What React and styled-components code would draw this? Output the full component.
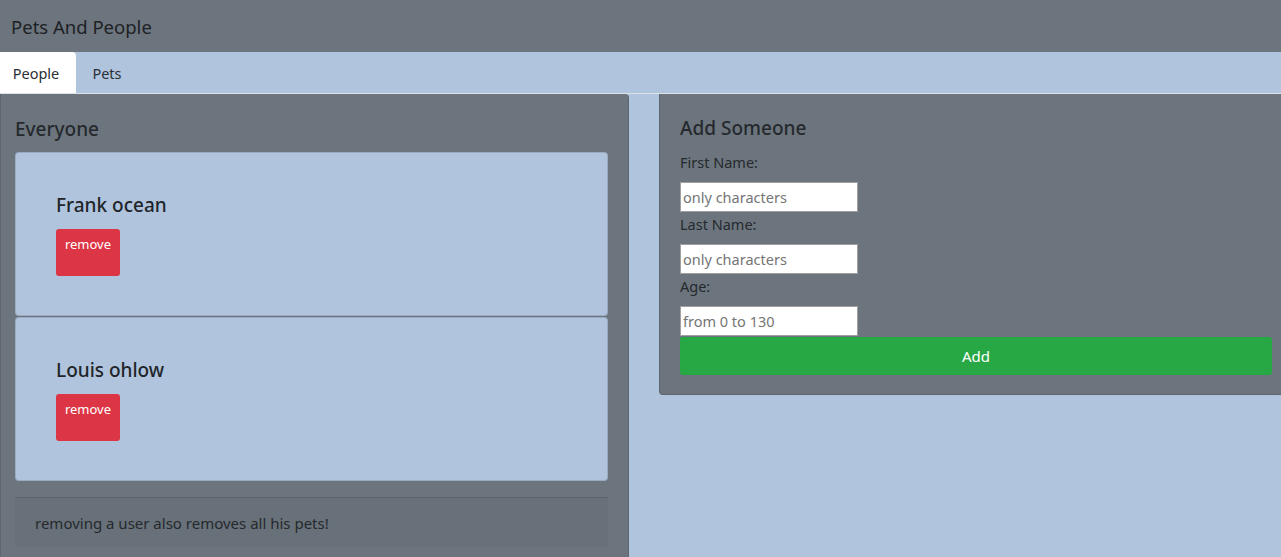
import React from 'react'
import styled, { createGlobalStyle } from 'styled-components'

const GlobalStyle = createGlobalStyle`
  html, body {
    margin: 0;
    padding: 0;
    background: #b0c4de;
    font-family: "Noto Sans", "Open Sans", sans-serif;
    color: #212529;
    overflow: hidden;
  }
`;

const NavBar = styled.header`
  height: 52px;
  background: #6c757d;
  display: flex;
  align-items: center;
  padding: 0 11px;
  font-size: 18.5px;
  color: #1e2125;
`;

const Tabs = styled.nav`
  display: flex;
  height: 41px;
  border-bottom: 1px solid #dee2e6;
  background: #b0c4de;
`;

const Tab = styled.div`
  width: ${p => p.$w}px;
  display: flex;
  align-items: center;
  justify-content: center;
  padding-right: ${p => (p.$active ? 4 : 0)}px;
  box-sizing: border-box;
  font-size: 14.5px;
  color: #2b3035;
  background: ${p => (p.$active ? '#fff' : 'transparent')};
  border-top-right-radius: 4px;
`;

const Content = styled.main`
  display: grid;
  grid-template-columns: 629px 1fr;
  column-gap: 30px;
  align-items: start;
  height: 464px;
`;

const Panel = styled.section`
  background: #6c757d;
  border: 1px solid rgba(0, 0, 0, 0.125);
  border-top: none;
  border-radius: 0 4px 4px 4px;
  box-sizing: border-box;
  padding: ${p => p.$pad};
  height: ${p => p.$h || 'auto'};
  margin-right: ${p => p.$mr || 0};
`;

const Heading = styled.h2`
  margin: 0 0 ${p => p.$mb}px;
  font-size: 19px;
  font-weight: 500;
  color: #25292d;
`;

const PersonCard = styled.div`
  background: #b0c4de;
  border: 1px solid rgba(0, 0, 0, 0.125);
  border-radius: 4px;
  height: 164px;
  box-sizing: border-box;
  padding: 39px 40px;
  & + & {
    margin-top: 1px;
  }
`;

const Name = styled.h3`
  margin: 0 0 11px;
  font-size: 19px;
  font-weight: 500;
  color: #212529;
`;

const RemoveButton = styled.button`
  width: 64px;
  height: 47px;
  border: none;
  border-radius: 3px;
  background: #dc3545;
  color: #fff;
  font-family: inherit;
  font-size: 13px;
  padding: 6px 0 0;
  display: flex;
  justify-content: center;
  align-items: flex-start;
`;

const Footer = styled.div`
  margin-top: 16px;
  border-top: 1px solid rgba(0, 0, 0, 0.125);
  background: rgba(0, 0, 0, 0.03);
  height: 49px;
  display: flex;
  align-items: center;
  padding-left: 20px;
  font-size: 15px;
  color: #25292d;
`;

const Field = styled.div`
  & + & {
    margin-top: 2px;
  }
`;

const Label = styled.label`
  display: block;
  font-size: 14.5px;
  line-height: 20px;
  color: #25292d;
  margin-bottom: 10px;
`;

const Input = styled.input`
  display: block;
  width: 178px;
  height: 30px;
  box-sizing: border-box;
  border: 1px solid #a0a0a0;
  background: #fff;
  padding: 0 2px;
  font-family: inherit;
  font-size: 14.5px;
  outline: none;
  &::placeholder {
    color: #757575;
  }
`;

const AddButton = styled.button`
  display: block;
  width: 592px;
  height: 38px;
  margin-top: 1px;
  border: none;
  border-radius: 3px;
  background: #28a745;
  color: #fff;
  font-family: inherit;
  font-size: 15px;
`;

const people = ['Frank ocean', 'Louis ohlow'];

const fields = [
  { label: 'First Name:', ph: 'only characters' },
  { label: 'Last Name:', ph: 'only characters' },
  { label: 'Age:', ph: 'from 0 to 130' },
];

export default function App() {
  return (
    <>
      <GlobalStyle />
      <NavBar>Pets And People</NavBar>
      <Tabs>
        <Tab $w={76} $active>People</Tab>
        <Tab $w={62}>Pets</Tab>
      </Tabs>
      <Content>
        <Panel $pad="22px 20px 0 14px" $h="470px">
          <Heading $mb={10}>Everyone</Heading>
          {people.map(n => (
            <PersonCard key={n}>
              <Name>{n}</Name>
              <RemoveButton>remove</RemoveButton>
            </PersonCard>
          ))}
          <Footer>removing a user also removes all his pets!</Footer>
        </Panel>
        <Panel $pad="21px 8px 19px 20px" $mr="-8px">
          <Heading $mb={11}>Add Someone</Heading>
          {fields.map(f => (
            <Field key={f.label}>
              <Label>{f.label}</Label>
              <Input placeholder={f.ph} />
            </Field>
          ))}
          <AddButton>Add</AddButton>
        </Panel>
      </Content>
    </>
  );
}
